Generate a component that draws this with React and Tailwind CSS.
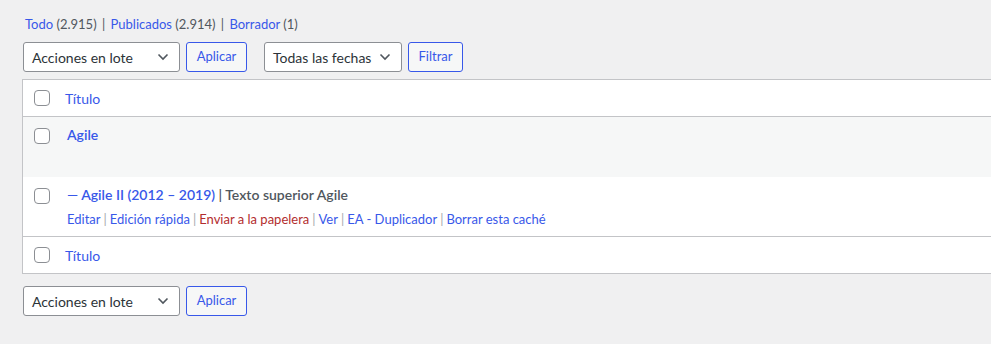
import React from "react";

const font = { fontFamily: '"Segoe UI", Lato, "Noto Sans", sans-serif' };

function Chevron() {
  return (
    <svg width="16" height="16" viewBox="0 0 16 16" className="shrink-0">
      <path d="M3.5 5.5l4.5 4.5 4.5-4.5" fill="none" stroke="#50575e" strokeWidth="1.6" />
    </svg>
  );
}

function Select({ label, w }) {
  return (
    <div
      className={`flex h-[30px] items-center justify-between whitespace-nowrap rounded-[3px] border border-[#8c8f94] bg-white pl-[8px] pr-[8px] text-[14px] text-[#2c3338] ${w}`}
    >
      <span>{label}</span>
      <Chevron />
    </div>
  );
}

function Button({ label, w }) {
  return (
    <div
      className={`flex h-[30px] items-center justify-center rounded-[3px] border border-[#3858e9] bg-[#f6f7f7] text-[13px] text-[#3858e9] ${w}`}
    >
      {label}
    </div>
  );
}

function Check() {
  return <div className="h-[16px] w-[16px] rounded-[4px] border border-[#8c8f94] bg-white" />;
}

function Sep() {
  return <span className="px-[3px] text-[#a7aaad]">|</span>;
}

export default function App() {
  return (
    <div className="min-h-[344px] w-full overflow-hidden bg-[#f0f0f1] pl-[22px] text-[13px] text-[#3c434a]" style={font}>
      <div className="mt-[11px] h-[26px] pl-[3px] leading-[26px] text-[#50575e]">
        <span className="text-[#3858e9]">Todo</span> (2.915) <span className="px-[2px]">|</span>{" "}
        <span className="text-[#3858e9]">Publicados</span> (2.914) <span className="px-[2px]">|</span>{" "}
        <span className="text-[#3858e9]">Borrador</span> (1)
      </div>

      <div className="mt-[5px] flex h-[30px] items-center pl-[1px]">
        <Select label="Acciones en lote" w="w-[157px]" />
        <div className="ml-[6px]">
          <Button label="Aplicar" w="w-[61px]" />
        </div>
        <div className="ml-[17px]">
          <Select label="Todas las fechas" w="w-[138px]" />
        </div>
        <div className="ml-[6px]">
          <Button label="Filtrar" w="w-[55px]" />
        </div>
      </div>

      <div className="mr-[-40px] mt-[7px] border border-[#c3c4c7] bg-white">
        <div className="flex h-[37px] items-center border-b border-[#c3c4c7]">
          <div className="flex w-[42px] justify-start pl-[11px]">
            <Check />
          </div>
          <span className="text-[14px] text-[#3858e9]">Título</span>
        </div>

        <div className="flex h-[60px] bg-[#f6f7f7]">
          <div className="w-[42px] pl-[11px] pt-[11px]">
            <Check />
          </div>
          <div className="pl-[2px] pt-[7px] text-[14px] font-semibold leading-[21px] text-[#3858e9]">Agile</div>
        </div>

        <div className="flex h-[59px] bg-white">
          <div className="w-[42px] pl-[11px] pt-[11px]">
            <Check />
          </div>
          <div className="pl-[2px] pt-[7px]">
            <div className="whitespace-nowrap text-[14px] font-semibold leading-[21px]">
              <span className="text-[#3858e9]">— Agile II (2012 – 2019)</span>
              <span className="text-[#50575e]"> | Texto superior Agile</span>
            </div>
            <div className="mt-[5px] whitespace-nowrap leading-[18px] text-[#3858e9]">
              <span>Editar</span>
              <Sep />
              <span>Edición rápida</span>
              <Sep />
              <span className="text-[#b32d2e]">Enviar a la papelera</span>
              <Sep />
              <span>Ver</span>
              <Sep />
              <span>EA - Duplicador</span>
              <Sep />
              <span>Borrar esta caché</span>
            </div>
          </div>
        </div>

        <div className="flex h-[37px] items-center border-t border-[#c3c4c7]">
          <div className="flex w-[42px] justify-start pl-[11px]">
            <Check />
          </div>
          <span className="text-[14px] text-[#3858e9]">Título</span>
        </div>
      </div>

      <div className="mt-[12px] flex h-[30px] items-center pl-[1px]">
        <Select label="Acciones en lote" w="w-[157px]" />
        <div className="ml-[6px]">
          <Button label="Aplicar" w="w-[61px]" />
        </div>
      </div>
    </div>
  );
}
